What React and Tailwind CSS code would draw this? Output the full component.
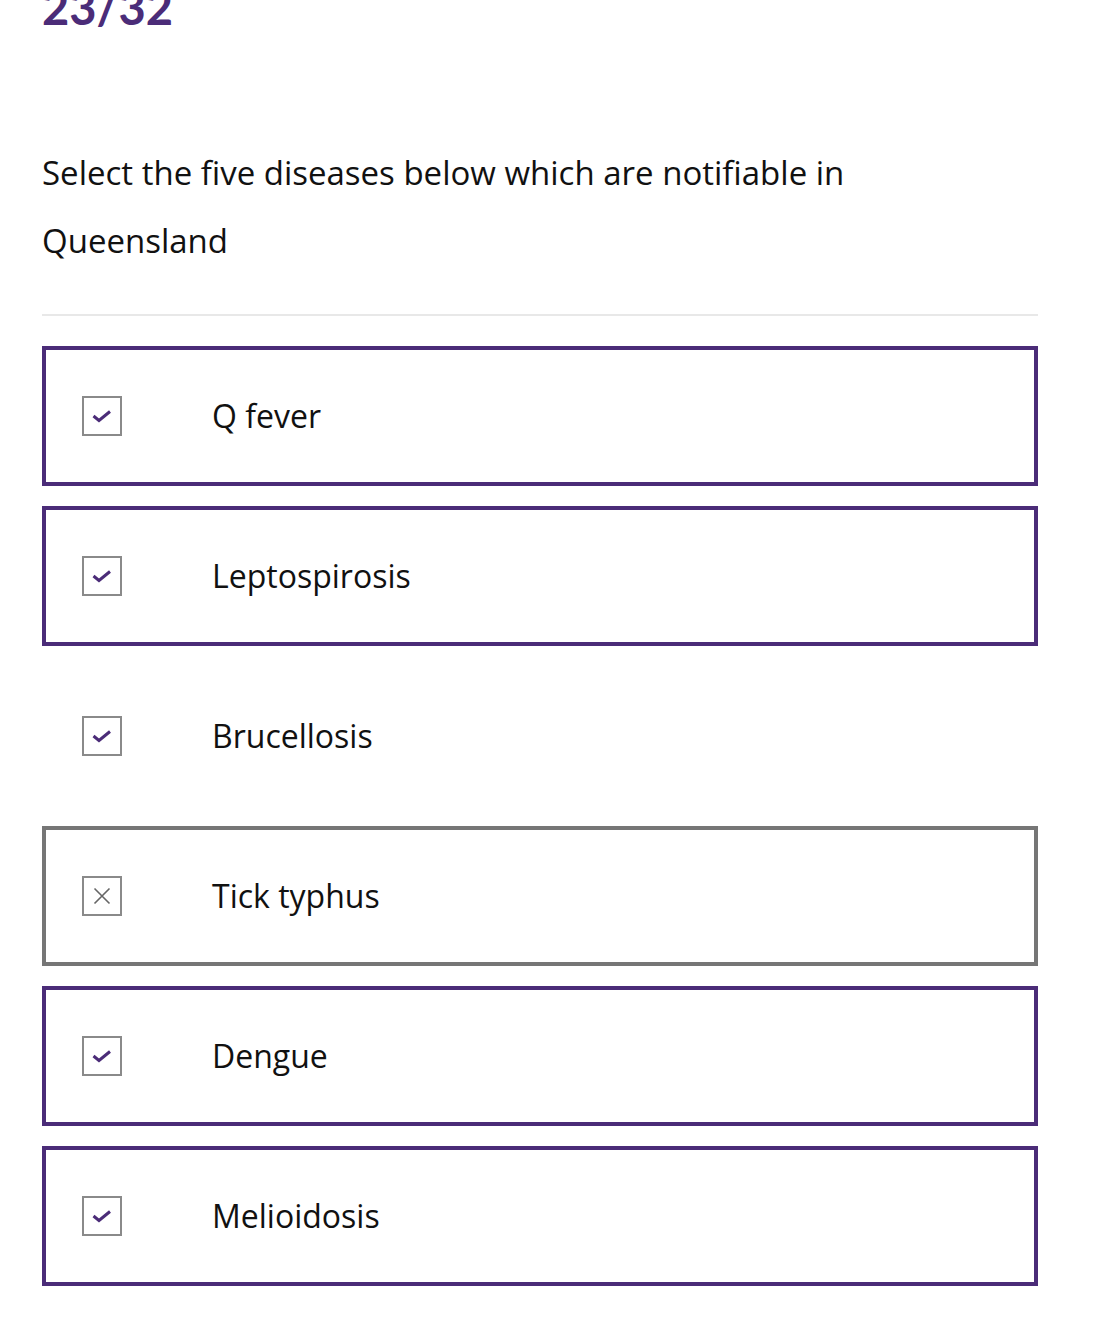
const options = [
  { label: 'Q fever', state: 'correct' },
  { label: 'Leptospirosis', state: 'correct' },
  { label: 'Brucellosis', state: 'missed' },
  { label: 'Tick typhus', state: 'wrong' },
  { label: 'Dengue', state: 'correct' },
  { label: 'Melioidosis', state: 'correct' },
];

function Box({ wrong }) {
  return (
    <div className="w-10 h-10 shrink-0 border-2 border-[#8a8a8a] flex items-center justify-center">
      {wrong ? (
        <svg width="18" height="18" viewBox="0 0 18 18">
          <path d="M1.5 1.5L16.5 16.5M16.5 1.5L1.5 16.5" stroke="#666" strokeWidth="1.6" />
        </svg>
      ) : (
        <svg width="20" height="20" viewBox="0 0 20 20">
          <path d="M1.5 10L7 14.5L18 5.5" stroke="#4b2c78" strokeWidth="3" fill="none" />
        </svg>
      )}
    </div>
  );
}

function Option({ label, state }) {
  const border =
    state === 'correct'
      ? 'border-[#4b2c78]'
      : state === 'wrong'
      ? 'border-[#767676]'
      : 'border-transparent';
  return (
    <div className={`h-[140px] border-4 ${border} flex items-center pl-9`}>
      <Box wrong={state === 'wrong'} />
      <span className="ml-[90px] text-[32px] text-[#111]">{label}</span>
    </div>
  );
}

export default function App() {
  return (
    <div className="bg-white min-h-screen px-[42px] w-[1038px] box-content" style={{ fontFamily: '"Open Sans", sans-serif' }}>
      <div
        className="text-[47px] leading-[48px] font-bold text-[#4b2c78] -mt-[17px]"
        style={{ fontFamily: 'Lato, sans-serif' }}
      >
        23/32
      </div>
      <p className="mt-[108px] text-[33px] leading-[68px] text-[#111] pr-[120px]">
        Select the five diseases below which are notifiable in Queensland
      </p>
      <div className="mt-[39px] h-[2px] bg-[#e8e8e8] w-[996px]" />
      <div className="mt-[30px] w-[996px] flex flex-col gap-5">
        {options.map((o) => (
          <Option key={o.label} {...o} />
        ))}
      </div>
    </div>
  );
}
